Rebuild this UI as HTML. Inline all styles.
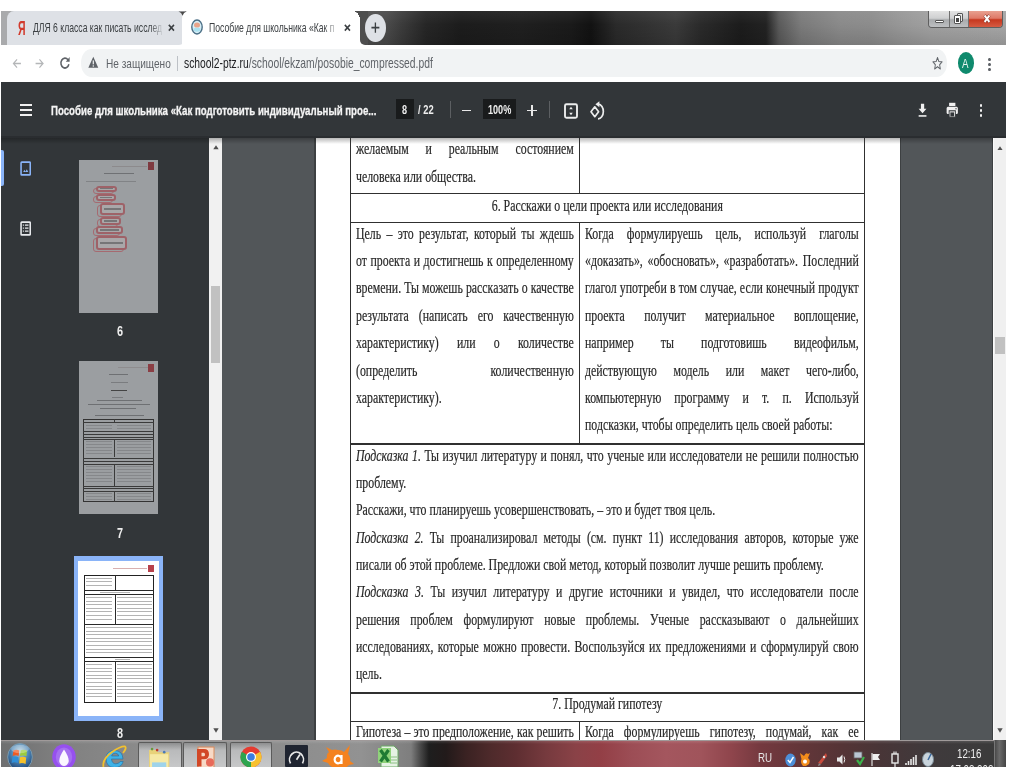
<!DOCTYPE html>
<html><head><meta charset="utf-8"><style>
html,body{margin:0;padding:0;background:#fff;}
body{width:1024px;height:767px;overflow:hidden;position:relative;}
.tl{position:absolute;-webkit-text-stroke:0.2px #333;filter:blur(0.3px);font-family:"Liberation Serif",serif;line-height:20px;white-space:nowrap;transform:scaleX(0.7496339677891655);transform-origin:0 0;}
.tl i{font-style:italic;}
.st{position:absolute;font-family:"Liberation Sans",sans-serif;line-height:20px;white-space:nowrap;}
div{box-sizing:border-box;}
</style></head><body>
<div style="position:absolute;left:1px;top:11px;width:1005px;height:34px;background:linear-gradient(rgba(255,255,255,.06),rgba(0,0,0,0) 40%,rgba(0,0,0,.12)),linear-gradient(90deg,#5a5a5a 0px,#505050 362px,#4a4a4a 386px,#3c3c3c 400px,#262626 425px,#1c1c1c 460px,#1f1f1f 520px,#1a1a1a 570px,#121212 590px,#2a2a2a 615px,#333 650px,#3a3a3a 675px,#2a2a2a 700px,#1c1c1c 740px,#222 765px,#5a5a5a 778px,#7a7a7a 800px,#8a8a8a 840px,#8c8c8c 870px,#979797 900px,#a0a0a0 930px,#a6a6a6 1005px)"></div>
<div style="position:absolute;left:1px;top:11px;width:16px;height:34px;background:#a9aaac"></div>
<div style="position:absolute;left:176px;top:34px;width:12px;height:11px;background:#fff"></div>
<div style="position:absolute;left:7px;top:11px;width:178px;height:33.5px;background:#dee1e6;border-radius:7px 0 6px 0/8px 0 8px 0"></div>
<div style="position:absolute;left:182px;top:11px;width:178px;height:34px;background:#fff;border-radius:5px 5px 0 0/8px 8px 0 0"></div>
<div style="position:absolute;left:355px;top:36px;width:12px;height:9px;background:#fff"></div>
<div style="position:absolute;left:359.5px;top:11px;width:8px;height:34px;background:#4e4e4e;border-radius:0 0 0 5px/0 0 0 5px"></div>
<div style="position:absolute;left:355px;top:11px;width:6px;height:10px;background:radial-gradient(ellipse 5px 9px at 0 100%,#fff 98%,#4e4e4e 100%)"></div>
<svg style="position:absolute;left:178px;top:10.5px;" width="9" height="5" viewBox="0 0 9 5" preserveAspectRatio="none"><path d="M0.5 0.5H8.5Q5.5 1.5 4.6 4.8Q3.6 1.5 0.5 0.5Z" fill="#4a4a4a"/></svg>
<div class="st" style="left:18.2px;top:18.32px;font-size:21px;color:#d23a2c;font-weight:bold;transform:scaleX(0.5);transform-origin:0 0">Я</div>
<div class="st" style="left:33px;top:18.3px;font-size:12.4px;color:#3c4043;font-weight:normal;transform:scaleX(.696);transform-origin:0 0;white-space:nowrap">ДЛЯ 6 класса как писать исслед</div>
<div style="position:absolute;left:150px;top:15px;width:14px;height:26px;background:linear-gradient(90deg,rgba(222,225,230,0),#dee1e6)"></div>
<svg style="position:absolute;left:168px;top:24.3px;" width="6.8" height="7.6" viewBox="0 0 10 10" preserveAspectRatio="none"><path d="M1.2 1.2L8.8 8.8M8.8 1.2L1.2 8.8" stroke="#3c4043" stroke-width="2.3"/></svg>
<svg style="position:absolute;left:191px;top:19px;" width="12" height="16" viewBox="0 0 12 16" preserveAspectRatio="none"><ellipse cx="6" cy="8" rx="5.2" ry="7" fill="#d8eef6" stroke="#4b6f86" stroke-width="1.4"/><ellipse cx="6" cy="6" rx="3" ry="2.6" fill="#e8a48a"/><path d="M2.5 9.5 Q6 8 9.5 9.5 L9 12 Q6 13.5 3 12Z" fill="#a9e1f0"/></svg>
<div class="st" style="left:209px;top:18.3px;font-size:12.4px;color:#3c4043;font-weight:normal;transform:scaleX(.696);transform-origin:0 0;white-space:nowrap">Пособие для школьника «Как п</div>
<div style="position:absolute;left:324px;top:15px;width:16px;height:26px;background:linear-gradient(90deg,rgba(255,255,255,0),#fff)"></div>
<svg style="position:absolute;left:344px;top:24.3px;" width="6.8" height="7.6" viewBox="0 0 10 10" preserveAspectRatio="none"><path d="M1.2 1.2L8.8 8.8M8.8 1.2L1.2 8.8" stroke="#3c4043" stroke-width="2.3"/></svg>
<div style="position:absolute;left:365px;top:13.6px;width:20.8px;height:28.3px;background:#dee1e6;border-radius:50%"></div>
<svg style="position:absolute;left:371px;top:22.4px;" width="8.8" height="11.4" viewBox="0 0 10 10" preserveAspectRatio="none"><path d="M5 0.5V9.5M0.5 5H9.5" stroke="#3c4043" stroke-width="1.5"/></svg>
<div style="position:absolute;left:928.3px;top:11px;width:75.2px;height:17.3px;border:1px solid #5f5f5f;border-top:none;border-radius:0 0 4px 4px;box-sizing:border-box;overflow:hidden;background:#999"><div style="position:absolute;left:0;top:0;width:20px;height:100%;background:linear-gradient(#e3e3e3,#cfd0d1 45%,#a9abad 55%,#bdbfc1)"></div><div style="position:absolute;left:20px;top:0;width:1px;height:100%;background:#707070"></div><div style="position:absolute;left:21px;top:0;width:18px;height:100%;background:linear-gradient(#e3e3e3,#cfd0d1 45%,#a9abad 55%,#bdbfc1)"></div><div style="position:absolute;left:39px;top:0;width:1px;height:100%;background:#707070"></div><div style="position:absolute;left:40px;top:0;width:36px;height:100%;background:linear-gradient(#e8a090,#df7a68 45%,#c6381f 55%,#d65b42)"></div></div>
<div style="position:absolute;left:935px;top:19.8px;width:9px;height:3.6px;background:#fff;border:1px solid #555;border-radius:1px;box-sizing:border-box"></div>
<div style="position:absolute;left:956.6px;top:13px;width:6.4px;height:8.6px;background:#e8e8e8;border:1px solid #555;border-radius:1px;box-sizing:border-box"></div>
<div style="position:absolute;left:954.3px;top:15px;width:6.6px;height:9.4px;background:#fff;border:1px solid #555;border-radius:1px;box-sizing:border-box"><div style="position:absolute;left:1.2px;top:2.2px;width:2.4px;height:3.6px;background:#444"></div></div>
<svg style="position:absolute;left:982.5px;top:14px;" width="8" height="9.5" viewBox="0 0 10 10" preserveAspectRatio="none"><path d="M2 1.5L8 8.5M8 1.5L2 8.5" stroke="#7a2a20" stroke-width="3.6"/><path d="M2 1.5L8 8.5M8 1.5L2 8.5" stroke="#fff" stroke-width="2.4"/></svg>
<div style="position:absolute;left:1px;top:45px;width:1005px;height:36.5px;background:#fff"></div>
<svg style="position:absolute;left:12px;top:57.5px;" width="9.5" height="11" viewBox="0 0 16 16" preserveAspectRatio="none"><path d="M15 8H2.5M8.5 2L2.5 8L8.5 14" fill="none" stroke="#b4b6b8" stroke-width="2"/></svg>
<svg style="position:absolute;left:35px;top:57.5px;" width="9.5" height="11" viewBox="0 0 16 16" preserveAspectRatio="none"><path d="M1 8H13.5M7.5 2L13.5 8L7.5 14" fill="none" stroke="#b4b6b8" stroke-width="2"/></svg>
<svg style="position:absolute;left:58.5px;top:56px;" width="12" height="14.5" viewBox="0 0 16 16" preserveAspectRatio="none"><path d="M13.2 9.2A5.4 5.4 0 1 1 12 4.2" fill="none" stroke="#5f6368" stroke-width="2"/><path d="M14.2 1.2V6.4H9Z" fill="#5f6368"/></svg>
<div style="position:absolute;left:80.6px;top:49.4px;width:866.4px;height:27.3px;background:#f1f3f4;border-radius:10.3px/13.6px"></div>
<svg style="position:absolute;left:88px;top:56.4px;" width="10.6" height="12.6" viewBox="0 0 16 16" preserveAspectRatio="none"><path d="M8 1L15.5 15H0.5Z" fill="#5f6368"/><rect x="7.1" y="5.6" width="1.8" height="5" fill="#f1f3f4"/><rect x="7.1" y="11.8" width="1.8" height="1.8" fill="#f1f3f4"/></svg>
<div class="st" style="left:105.5px;top:53.64px;font-size:13.45px;color:#5f6368;font-weight:normal;transform:scaleX(.75);transform-origin:0 0;white-space:nowrap">Не защищено</div>
<div style="position:absolute;left:176.6px;top:56px;width:1px;height:15px;background:#bdc1c6"></div>
<div class="st" style="left:184px;top:53.54px;font-size:13.75px;color:#5f6368;font-weight:normal;transform:scaleX(.75);transform-origin:0 0;white-space:nowrap"><span style="color:#202124">school2-ptz.ru</span>/school/ekzam/posobie_compressed.pdf</div>
<svg style="position:absolute;left:931.5px;top:55.5px;" width="11" height="14.5" viewBox="0 0 24 24" preserveAspectRatio="none"><path d="M12 2.5l2.9 6.6 7.1.6-5.4 4.7 1.6 7-6.2-3.7-6.2 3.7 1.6-7L2 9.7l7.1-.6z" fill="none" stroke="#5f6368" stroke-width="2" stroke-linejoin="round"/></svg>
<div style="position:absolute;left:958.3px;top:52px;width:16px;height:21.5px;background:#0f8a6d;border-radius:50%"></div>
<div class="st" style="left:962.2px;top:53.5px;font-size:13px;color:#e8f5f0;font-weight:normal;transform:scaleX(.75);transform-origin:0 0">A</div>
<div style="position:absolute;left:988.4px;top:57.6px;width:2.4px;height:3px;background:#5f6368;border-radius:50%"></div>
<div style="position:absolute;left:988.4px;top:62.6px;width:2.4px;height:3px;background:#5f6368;border-radius:50%"></div>
<div style="position:absolute;left:988.4px;top:67.6px;width:2.4px;height:3px;background:#5f6368;border-radius:50%"></div>
<div style="position:absolute;left:1px;top:81.5px;width:1005px;height:56.2px;background:#323639"></div>
<div style="position:absolute;left:20px;top:104px;width:12px;height:2px;background:#f1f1f1"></div>
<div style="position:absolute;left:20px;top:109px;width:12px;height:2px;background:#f1f1f1"></div>
<div style="position:absolute;left:20px;top:114px;width:12px;height:2px;background:#f1f1f1"></div>
<div class="st" style="left:51.3px;top:100.74px;font-size:12.88px;color:#f4f4f4;font-weight:bold;transform:scaleX(.75);transform-origin:0 0;white-space:nowrap;-webkit-text-stroke:0.3px #f4f4f4">Пособие для школьника «Как подготовить индивидуальный прое...</div>
<div style="position:absolute;left:396px;top:99.4px;width:17.5px;height:19.6px;background:#191b1c"></div>
<div class="st" style="left:401.5px;top:99.8px;font-size:13px;color:#eeeeee;font-weight:bold;transform:scaleX(.7);transform-origin:0 0">8</div>
<div class="st" style="left:417.5px;top:99.8px;font-size:13px;color:#eeeeee;font-weight:bold;transform:scaleX(.72);transform-origin:0 0;white-space:nowrap">/ 22</div>
<div style="position:absolute;left:450px;top:101px;width:1px;height:17px;background:#5c5f62"></div>
<div style="position:absolute;left:462px;top:109.5px;width:9px;height:1.6px;background:#e8e8e8"></div>
<div style="position:absolute;left:483px;top:99.4px;width:33px;height:19.6px;background:#191b1c"></div>
<div class="st" style="left:487.8px;top:99.8px;font-size:13px;color:#eeeeee;font-weight:bold;transform:scaleX(.70);transform-origin:0 0;white-space:nowrap">100%</div>
<div style="position:absolute;left:527px;top:109.8px;width:10px;height:1.5px;background:#e8e8e8"></div>
<div style="position:absolute;left:531.3px;top:104.8px;width:1.4px;height:11.6px;background:#e8e8e8"></div>
<div style="position:absolute;left:549px;top:101px;width:1px;height:17px;background:#5c5f62"></div>
<svg style="position:absolute;left:560px;top:98px;" width="50" height="25" viewBox="0 0 50 25" preserveAspectRatio="none"><rect x="5" y="6.3" width="12" height="13.5" rx="1.5" fill="none" stroke="#eceded" stroke-width="1.9"/><path d="M11 8.8L9.2 11.3H12.8Z M11 17.2L9.2 14.7H12.8Z" fill="#eceded"/><path d="M34.8 8.8L38.6 13.7L34.8 18.7L31 13.7Z" fill="none" stroke="#eceded" stroke-width="1.7" stroke-linejoin="round"/><path d="M38.3 6.2A5.2 7.3 0 0 1 38 20.8" fill="none" stroke="#eceded" stroke-width="1.7"/><path d="M39.4 3.2V9.2L35.4 6.2Z" fill="#eceded"/></svg>
<svg style="position:absolute;left:917.5px;top:102.7px;" width="9.1" height="14.3" viewBox="0 0 14 20" preserveAspectRatio="none"><path d="M4.5 1H9.5V8H13L7 14.5L1 8H4.5Z" fill="#f1f1f1"/><rect x="1" y="17" width="12" height="2.2" fill="#f1f1f1"/></svg>
<svg style="position:absolute;left:945.5px;top:102px;" width="12.5" height="16" viewBox="0 0 20 20" preserveAspectRatio="none"><rect x="5" y="1" width="10" height="4" fill="#f1f1f1"/><rect x="1" y="6" width="18" height="9" rx="2" fill="#f1f1f1"/><rect x="5" y="11" width="10" height="8" fill="#f1f1f1" stroke="#323639" stroke-width="1.4"/><rect x="7" y="13" width="6" height="5" fill="#323639"/><circle cx="16" cy="8.5" r="1" fill="#323639"/></svg>
<div style="position:absolute;left:980px;top:104px;width:2.4px;height:2.6px;background:#f1f1f1;border-radius:50%"></div>
<div style="position:absolute;left:980px;top:109.2px;width:2.4px;height:2.6px;background:#f1f1f1;border-radius:50%"></div>
<div style="position:absolute;left:980px;top:114.4px;width:2.4px;height:2.6px;background:#f1f1f1;border-radius:50%"></div>
<div style="position:absolute;left:1px;top:137.7px;width:208px;height:602.3px;background:#323639"></div>
<div style="position:absolute;left:1px;top:150px;width:2.6px;height:36px;background:#8ab4f8;border-radius:0 2px 2px 0"></div>
<svg style="position:absolute;left:20.2px;top:160.5px;" width="11.3" height="15" viewBox="0 0 16 20" preserveAspectRatio="none"><rect x="1.5" y="1.5" width="13" height="17" rx="1" fill="none" stroke="#8ab4f8" stroke-width="2.2"/><path d="M4.5 14.5L6.3 11.5L8 14.5Z M7.5 14.5L9.6 11L11.7 14.5Z" fill="#8ab4f8"/></svg>
<svg style="position:absolute;left:20.2px;top:220.5px;" width="11.3" height="15" viewBox="0 0 16 20" preserveAspectRatio="none"><rect x="1.5" y="1.5" width="13" height="17" rx="1" fill="none" stroke="#e8eaed" stroke-width="2.2"/><path d="M4 5.5H5.5M4 9.5H5.5M4 13.5H5.5M7 5.5H12M7 9.5H12M7 13.5H12" stroke="#e8eaed" stroke-width="1.8"/></svg>
<div style="position:absolute;left:0;top:0;width:1024px;height:767px;filter:blur(0.35px)">
<div style="position:absolute;left:78.8px;top:159.8px;width:79.2px;height:152.8px;background:#9b9ea1"></div>
<div style="position:absolute;left:147.6px;top:161.8px;width:6.9px;height:8.2px;background:#7e3a40"></div>
<div style="position:absolute;left:112px;top:166px;width:35px;height:0.8px;background:#8c8a8c"></div>
<div style="position:absolute;left:104px;top:173px;width:30px;height:1.2px;background:#6f7174"></div>
<div style="position:absolute;left:86px;top:181px;width:50px;height:1px;background:#818386"></div>
<div style="position:absolute;left:93px;top:188px;width:21px;height:5.5px;border:1.8px solid #a66a70;border-radius:3px;box-sizing:border-box"></div>
<div style="position:absolute;left:96px;top:186px;width:21px;height:5.5px;border:2px solid #9e6268;border-radius:3px;box-sizing:border-box;background:#a9a7a9"></div>
<div style="position:absolute;left:100px;top:188.15px;width:13px;height:1.2px;background:#767577"></div>
<div style="position:absolute;left:93px;top:196px;width:20px;height:7px;border:1.8px solid #a66a70;border-radius:3px;box-sizing:border-box"></div>
<div style="position:absolute;left:96px;top:194px;width:20px;height:7px;border:2px solid #9e6268;border-radius:3px;box-sizing:border-box;background:#a9a7a9"></div>
<div style="position:absolute;left:100px;top:196.9px;width:12px;height:1.2px;background:#767577"></div>
<div style="position:absolute;left:97px;top:205px;width:25px;height:12px;border:1.8px solid #a66a70;border-radius:3px;box-sizing:border-box"></div>
<div style="position:absolute;left:100px;top:203px;width:25px;height:12px;border:2px solid #9e6268;border-radius:3px;box-sizing:border-box;background:#a9a7a9"></div>
<div style="position:absolute;left:104px;top:208.4px;width:17px;height:1.2px;background:#767577"></div>
<div style="position:absolute;left:97px;top:219px;width:21px;height:8px;border:1.8px solid #a66a70;border-radius:3px;box-sizing:border-box"></div>
<div style="position:absolute;left:100px;top:217px;width:21px;height:8px;border:2px solid #9e6268;border-radius:3px;box-sizing:border-box;background:#a9a7a9"></div>
<div style="position:absolute;left:104px;top:220.4px;width:13px;height:1.2px;background:#767577"></div>
<div style="position:absolute;left:93px;top:228px;width:27px;height:8px;border:1.8px solid #a66a70;border-radius:3px;box-sizing:border-box"></div>
<div style="position:absolute;left:96px;top:226px;width:27px;height:8px;border:2px solid #9e6268;border-radius:3px;box-sizing:border-box;background:#a9a7a9"></div>
<div style="position:absolute;left:100px;top:229.4px;width:19px;height:1.2px;background:#767577"></div>
<div style="position:absolute;left:93px;top:238px;width:31px;height:14px;border:1.8px solid #a66a70;border-radius:3px;box-sizing:border-box"></div>
<div style="position:absolute;left:96px;top:236px;width:31px;height:14px;border:2px solid #9e6268;border-radius:3px;box-sizing:border-box;background:#a9a7a9"></div>
<div style="position:absolute;left:100px;top:242.4px;width:23px;height:1.2px;background:#767577"></div>
<div class="st" style="left:116.5px;top:320.98px;font-size:14.5px;color:#eeeeee;font-weight:bold;transform:scaleX(.75);transform-origin:0 0">6</div>
<div style="position:absolute;left:78.8px;top:361px;width:79.2px;height:152.8px;background:#9b9ea1"></div>
<div style="position:absolute;left:148px;top:364px;width:6px;height:7.6px;background:#8a3e44"></div>
<div style="position:absolute;left:118px;top:367px;width:30px;height:0.8px;background:#8e8c8e"></div>
<div style="position:absolute;left:109px;top:374px;width:19px;height:1px;background:#6e7073"></div>
<div style="position:absolute;left:111px;top:382px;width:17px;height:1px;background:#7a7c7f"></div>
<div style="position:absolute;left:111px;top:389.5px;width:16px;height:1.6px;background:#444"></div>
<div style="position:absolute;left:112px;top:397px;width:11px;height:1px;background:#7a7c7f"></div>
<div style="position:absolute;left:97px;top:400.3px;width:45px;height:1px;background:#6e7073"></div>
<div style="position:absolute;left:88px;top:404.3px;width:62px;height:1px;background:#6e7073"></div>
<div style="position:absolute;left:100px;top:408.3px;width:36px;height:1px;background:#6e7073"></div>
<div style="position:absolute;left:95px;top:414.8px;width:49px;height:1px;background:#6e7073"></div>
<div style="position:absolute;left:83.4px;top:418.5px;width:70.3px;height:83.5px;border:1.2px solid #333;box-sizing:border-box"></div>
<div style="position:absolute;left:83.4px;top:422.3px;width:70.3px;height:0.9px;background:#3a3a3a"></div>
<div style="position:absolute;left:83.4px;top:431.3px;width:70.3px;height:0.9px;background:#3a3a3a"></div>
<div style="position:absolute;left:83.4px;top:433.6px;width:70.3px;height:0.9px;background:#3a3a3a"></div>
<div style="position:absolute;left:83.4px;top:436.6px;width:70.3px;height:0.9px;background:#3a3a3a"></div>
<div style="position:absolute;left:83.4px;top:438.8px;width:70.3px;height:0.9px;background:#3a3a3a"></div>
<div style="position:absolute;left:83.4px;top:457.5px;width:70.3px;height:0.9px;background:#3a3a3a"></div>
<div style="position:absolute;left:83.4px;top:461.3px;width:70.3px;height:0.9px;background:#3a3a3a"></div>
<div style="position:absolute;left:83.4px;top:463.6px;width:70.3px;height:0.9px;background:#3a3a3a"></div>
<div style="position:absolute;left:83.4px;top:486.2px;width:70.3px;height:0.9px;background:#3a3a3a"></div>
<div style="position:absolute;left:83.4px;top:488.4px;width:70.3px;height:0.9px;background:#3a3a3a"></div>
<div style="position:absolute;left:83.4px;top:490.8px;width:70.3px;height:0.9px;background:#3a3a3a"></div>
<div style="position:absolute;left:114.2px;top:418.5px;width:0.9px;height:3.8px;background:#3a3a3a"></div>
<div style="position:absolute;left:114.2px;top:438.8px;width:0.9px;height:18.7px;background:#3a3a3a"></div>
<div style="position:absolute;left:114.2px;top:463.6px;width:0.9px;height:22.6px;background:#3a3a3a"></div>
<div style="position:absolute;left:114.2px;top:490.8px;width:0.9px;height:11.2px;background:#3a3a3a"></div>
<div style="position:absolute;left:86px;top:425px;width:26px;height:0.7px;background:#85878a"></div>
<div style="position:absolute;left:117px;top:425px;width:34px;height:0.7px;background:#85878a"></div>
<div style="position:absolute;left:86px;top:428px;width:26px;height:0.7px;background:#85878a"></div>
<div style="position:absolute;left:117px;top:428px;width:34px;height:0.7px;background:#85878a"></div>
<div style="position:absolute;left:86px;top:441px;width:26px;height:0.7px;background:#85878a"></div>
<div style="position:absolute;left:117px;top:441px;width:34px;height:0.7px;background:#85878a"></div>
<div style="position:absolute;left:86px;top:444px;width:26px;height:0.7px;background:#85878a"></div>
<div style="position:absolute;left:117px;top:444px;width:34px;height:0.7px;background:#85878a"></div>
<div style="position:absolute;left:86px;top:447px;width:26px;height:0.7px;background:#85878a"></div>
<div style="position:absolute;left:117px;top:447px;width:34px;height:0.7px;background:#85878a"></div>
<div style="position:absolute;left:86px;top:450px;width:26px;height:0.7px;background:#85878a"></div>
<div style="position:absolute;left:117px;top:450px;width:34px;height:0.7px;background:#85878a"></div>
<div style="position:absolute;left:86px;top:453px;width:26px;height:0.7px;background:#85878a"></div>
<div style="position:absolute;left:117px;top:453px;width:34px;height:0.7px;background:#85878a"></div>
<div style="position:absolute;left:86px;top:466px;width:26px;height:0.7px;background:#85878a"></div>
<div style="position:absolute;left:117px;top:466px;width:34px;height:0.7px;background:#85878a"></div>
<div style="position:absolute;left:86px;top:469px;width:26px;height:0.7px;background:#85878a"></div>
<div style="position:absolute;left:117px;top:469px;width:34px;height:0.7px;background:#85878a"></div>
<div style="position:absolute;left:86px;top:472px;width:26px;height:0.7px;background:#85878a"></div>
<div style="position:absolute;left:117px;top:472px;width:34px;height:0.7px;background:#85878a"></div>
<div style="position:absolute;left:86px;top:475px;width:26px;height:0.7px;background:#85878a"></div>
<div style="position:absolute;left:117px;top:475px;width:34px;height:0.7px;background:#85878a"></div>
<div style="position:absolute;left:86px;top:478px;width:26px;height:0.7px;background:#85878a"></div>
<div style="position:absolute;left:117px;top:478px;width:34px;height:0.7px;background:#85878a"></div>
<div style="position:absolute;left:86px;top:481px;width:26px;height:0.7px;background:#85878a"></div>
<div style="position:absolute;left:117px;top:481px;width:34px;height:0.7px;background:#85878a"></div>
<div style="position:absolute;left:86px;top:493px;width:26px;height:0.7px;background:#85878a"></div>
<div style="position:absolute;left:117px;top:493px;width:34px;height:0.7px;background:#85878a"></div>
<div style="position:absolute;left:86px;top:496px;width:26px;height:0.7px;background:#85878a"></div>
<div style="position:absolute;left:117px;top:496px;width:34px;height:0.7px;background:#85878a"></div>
<div style="position:absolute;left:86px;top:499px;width:26px;height:0.7px;background:#85878a"></div>
<div style="position:absolute;left:117px;top:499px;width:34px;height:0.7px;background:#85878a"></div>
<div class="st" style="left:116.5px;top:522.98px;font-size:14.5px;color:#eeeeee;font-weight:bold;transform:scaleX(.75);transform-origin:0 0">7</div>
<div style="position:absolute;left:73.6px;top:556px;width:89.4px;height:165px;background:#8ab4f8"></div>
<div style="position:absolute;left:78px;top:561px;width:80.5px;height:155px;background:#fff"></div>
<div style="position:absolute;left:148px;top:565px;width:5.8px;height:6.8px;background:#b8414b"></div>
<div style="position:absolute;left:113px;top:568px;width:34px;height:0.8px;background:#d9b0b0"></div>
<div style="position:absolute;left:83.6px;top:574.8px;width:70.2px;height:127.8px;border:1.2px solid #222;box-sizing:border-box"></div>
<div style="position:absolute;left:83.6px;top:590.2px;width:70.2px;height:1.1px;background:#2a2a2a"></div>
<div style="position:absolute;left:83.6px;top:594px;width:70.2px;height:1.1px;background:#2a2a2a"></div>
<div style="position:absolute;left:83.6px;top:623.8px;width:70.2px;height:1.1px;background:#2a2a2a"></div>
<div style="position:absolute;left:83.6px;top:657px;width:70.2px;height:1.1px;background:#2a2a2a"></div>
<div style="position:absolute;left:83.6px;top:660.8px;width:70.2px;height:1.1px;background:#2a2a2a"></div>
<div style="position:absolute;left:114.6px;top:574.8px;width:1px;height:15.4px;background:#2a2a2a"></div>
<div style="position:absolute;left:114.6px;top:594px;width:1px;height:29.8px;background:#2a2a2a"></div>
<div style="position:absolute;left:114.6px;top:660.8px;width:1px;height:41.8px;background:#2a2a2a"></div>
<div style="position:absolute;left:86px;top:577.5px;width:26px;height:1px;background:#b4b4b4"></div>
<div style="position:absolute;left:86px;top:581.2px;width:26px;height:1px;background:#b4b4b4"></div>
<div style="position:absolute;left:86px;top:585px;width:26px;height:1px;background:#b4b4b4"></div>
<div style="position:absolute;left:86px;top:597px;width:26px;height:1px;background:#b4b4b4"></div>
<div style="position:absolute;left:86px;top:600.6px;width:26px;height:1px;background:#b4b4b4"></div>
<div style="position:absolute;left:86px;top:604.2px;width:26px;height:1px;background:#b4b4b4"></div>
<div style="position:absolute;left:86px;top:607.8px;width:26px;height:1px;background:#b4b4b4"></div>
<div style="position:absolute;left:86px;top:611.4px;width:26px;height:1px;background:#b4b4b4"></div>
<div style="position:absolute;left:86px;top:615px;width:26px;height:1px;background:#b4b4b4"></div>
<div style="position:absolute;left:86px;top:618.6px;width:26px;height:1px;background:#b4b4b4"></div>
<div style="position:absolute;left:117px;top:597px;width:34.5px;height:1px;background:#b4b4b4"></div>
<div style="position:absolute;left:117px;top:600.6px;width:34.5px;height:1px;background:#b4b4b4"></div>
<div style="position:absolute;left:117px;top:604.2px;width:34.5px;height:1px;background:#b4b4b4"></div>
<div style="position:absolute;left:117px;top:607.8px;width:34.5px;height:1px;background:#b4b4b4"></div>
<div style="position:absolute;left:117px;top:611.4px;width:34.5px;height:1px;background:#b4b4b4"></div>
<div style="position:absolute;left:117px;top:615px;width:34.5px;height:1px;background:#b4b4b4"></div>
<div style="position:absolute;left:117px;top:618.6px;width:34.5px;height:1px;background:#b4b4b4"></div>
<div style="position:absolute;left:86px;top:627px;width:65.5px;height:1px;background:#b4b4b4"></div>
<div style="position:absolute;left:86px;top:630.6px;width:65.5px;height:1px;background:#b4b4b4"></div>
<div style="position:absolute;left:86px;top:634.2px;width:65.5px;height:1px;background:#b4b4b4"></div>
<div style="position:absolute;left:86px;top:637.8px;width:65.5px;height:1px;background:#b4b4b4"></div>
<div style="position:absolute;left:86px;top:641.4px;width:65.5px;height:1px;background:#b4b4b4"></div>
<div style="position:absolute;left:86px;top:645px;width:65.5px;height:1px;background:#b4b4b4"></div>
<div style="position:absolute;left:86px;top:648.6px;width:65.5px;height:1px;background:#b4b4b4"></div>
<div style="position:absolute;left:86px;top:652.2px;width:65.5px;height:1px;background:#b4b4b4"></div>
<div style="position:absolute;left:100px;top:592px;width:30px;height:1px;background:#b4b4b4"></div>
<div style="position:absolute;left:115px;top:659px;width:15px;height:1px;background:#b4b4b4"></div>
<div style="position:absolute;left:86px;top:664px;width:26px;height:1px;background:#b4b4b4"></div>
<div style="position:absolute;left:86px;top:667.6px;width:26px;height:1px;background:#b4b4b4"></div>
<div style="position:absolute;left:86px;top:671.2px;width:26px;height:1px;background:#b4b4b4"></div>
<div style="position:absolute;left:86px;top:674.8px;width:26px;height:1px;background:#b4b4b4"></div>
<div style="position:absolute;left:86px;top:678.4px;width:26px;height:1px;background:#b4b4b4"></div>
<div style="position:absolute;left:86px;top:682px;width:26px;height:1px;background:#b4b4b4"></div>
<div style="position:absolute;left:86px;top:685.6px;width:26px;height:1px;background:#b4b4b4"></div>
<div style="position:absolute;left:86px;top:689.2px;width:26px;height:1px;background:#b4b4b4"></div>
<div style="position:absolute;left:86px;top:692.8px;width:26px;height:1px;background:#b4b4b4"></div>
<div style="position:absolute;left:86px;top:696.4px;width:26px;height:1px;background:#b4b4b4"></div>
<div style="position:absolute;left:117px;top:664px;width:34.5px;height:1px;background:#b4b4b4"></div>
<div style="position:absolute;left:117px;top:667.6px;width:34.5px;height:1px;background:#b4b4b4"></div>
<div style="position:absolute;left:117px;top:671.2px;width:34.5px;height:1px;background:#b4b4b4"></div>
<div style="position:absolute;left:117px;top:674.8px;width:34.5px;height:1px;background:#b4b4b4"></div>
<div style="position:absolute;left:117px;top:678.4px;width:34.5px;height:1px;background:#b4b4b4"></div>
<div style="position:absolute;left:117px;top:682px;width:34.5px;height:1px;background:#b4b4b4"></div>
<div style="position:absolute;left:117px;top:685.6px;width:34.5px;height:1px;background:#b4b4b4"></div>
<div style="position:absolute;left:117px;top:689.2px;width:34.5px;height:1px;background:#b4b4b4"></div>
<div style="position:absolute;left:117px;top:692.8px;width:34.5px;height:1px;background:#b4b4b4"></div>
<div style="position:absolute;left:117px;top:696.4px;width:34.5px;height:1px;background:#b4b4b4"></div>
<div class="st" style="left:116.5px;top:723.48px;font-size:14.5px;color:#eeeeee;font-weight:bold;transform:scaleX(.75);transform-origin:0 0">8</div>
</div>
<div style="position:absolute;left:209px;top:137.7px;width:13px;height:602.3px;background:#f1f1f1"></div>
<svg style="position:absolute;left:212.5px;top:145px;" width="6" height="4.5" viewBox="0 0 10 8" preserveAspectRatio="none"><path d="M5 0.5L9.5 7.5H0.5Z" fill="#505050"/></svg>
<div style="position:absolute;left:210.5px;top:285.5px;width:9.1px;height:77.5px;background:#c1c1c1"></div>
<svg style="position:absolute;left:212.5px;top:727.5px;" width="6" height="5" viewBox="0 0 10 8" preserveAspectRatio="none"><path d="M5 7.5L9.5 0.5H0.5Z" fill="#505050"/></svg>
<div style="position:absolute;left:222px;top:137.7px;width:771.5px;height:602.3px;background:#525659"></div>
<div style="position:absolute;left:315.4px;top:137.7px;width:584.3px;height:602.3px;background:#fff"></div>
<div style="position:absolute;left:314.2px;top:137.7px;width:1.4px;height:602.3px;background:#3d4042"></div>
<div style="position:absolute;left:899.6px;top:137.7px;width:1.4px;height:602.3px;background:#3d4042"></div>
<div style="position:absolute;left:991.8px;top:137.7px;width:1.6px;height:602.3px;background:#3d4042"></div>
<div style="position:absolute;left:1px;top:136.2px;width:1005px;height:1.5px;background:#2a2d30"></div>
<div style="position:absolute;left:1px;top:137.7px;width:1005px;height:6px;background:linear-gradient(rgba(0,0,0,.28),rgba(0,0,0,0))"></div>
<div style="position:absolute;left:993.4px;top:137.7px;width:12.2px;height:602.3px;background:#f0f0f0;border-left:1.2px solid #fafafa"></div>
<svg style="position:absolute;left:996.8px;top:145.5px;" width="6" height="4.5" viewBox="0 0 10 8" preserveAspectRatio="none"><path d="M5 0.5L9.5 7.5H0.5Z" fill="#505050"/></svg>
<div style="position:absolute;left:995px;top:337.3px;width:9.5px;height:16.5px;background:#c1c1c1"></div>
<svg style="position:absolute;left:997px;top:727.5px;" width="6" height="5" viewBox="0 0 10 8" preserveAspectRatio="none"><path d="M5 7.5L9.5 0.5H0.5Z" fill="#505050"/></svg>
<div style="position:absolute;left:350px;top:137.7px;width:1.3px;height:602.3px;background:#303030"></div>
<div style="position:absolute;left:863.9px;top:137.7px;width:1.3px;height:602.3px;background:#303030"></div>
<div style="position:absolute;left:578.7px;top:137.7px;width:1.3px;height:55.7px;background:#303030"></div>
<div style="position:absolute;left:578.7px;top:222.5px;width:1.3px;height:221.5px;background:#303030"></div>
<div style="position:absolute;left:578.7px;top:721.3px;width:1.3px;height:18.7px;background:#303030"></div>
<div style="position:absolute;left:350.6px;top:192.6px;width:514.9px;height:1.6px;background:#303030"></div>
<div style="position:absolute;left:350.6px;top:221.7px;width:514.9px;height:1.6px;background:#303030"></div>
<div style="position:absolute;left:350.6px;top:443.2px;width:514.9px;height:1.6px;background:#303030"></div>
<div style="position:absolute;left:350.6px;top:692.4px;width:514.9px;height:1.6px;background:#303030"></div>
<div style="position:absolute;left:350.6px;top:720.5px;width:514.9px;height:1.6px;background:#303030"></div>
<div class="tl" style="left:356px;top:139.07px;width:290.54px;font-size:15.8px;text-align:justify;text-align-last:justify;color:#262626">желаемым и реальным состоянием</div>
<div class="tl" style="left:356px;top:166.57px;width:290.54px;font-size:15.8px;text-align:left;color:#262626">человека или общества.</div>
<div class="tl" style="left:356px;top:195.57px;width:670.46px;font-size:15.8px;text-align:center;color:#262626">6. Расскажи о цели проекта или исследования</div>
<div class="tl" style="left:356px;top:223.77px;width:290.54px;font-size:15.8px;text-align:justify;text-align-last:justify;color:#262626">Цель – это результат, который ты ждешь</div>
<div class="tl" style="left:356px;top:251.12px;width:290.54px;font-size:15.8px;text-align:justify;text-align-last:justify;color:#262626">от проекта и достигнешь к определенному</div>
<div class="tl" style="left:356px;top:278.47px;width:290.54px;font-size:15.8px;text-align:justify;text-align-last:justify;color:#262626">времени. Ты можешь рассказать о качестве</div>
<div class="tl" style="left:356px;top:305.82px;width:290.54px;font-size:15.8px;text-align:justify;text-align-last:justify;color:#262626">результата (написать его качественную</div>
<div class="tl" style="left:356px;top:333.17px;width:290.54px;font-size:15.8px;text-align:justify;text-align-last:justify;color:#262626">характеристику) или о количестве</div>
<div class="tl" style="left:356px;top:360.52px;width:290.54px;font-size:15.8px;text-align:justify;text-align-last:justify;color:#262626">(определить количественную</div>
<div class="tl" style="left:356px;top:387.87px;width:290.54px;font-size:15.8px;text-align:left;color:#262626">характеристику).</div>
<div class="tl" style="left:584.8px;top:223.77px;width:365.24px;font-size:15.8px;text-align:justify;text-align-last:justify;color:#262626">Когда формулируешь цель, используй глаголы</div>
<div class="tl" style="left:584.8px;top:251.12px;width:365.24px;font-size:15.8px;text-align:justify;text-align-last:justify;color:#262626">«доказать», «обосновать», «разработать». Последний</div>
<div class="tl" style="left:584.8px;top:278.47px;width:365.24px;font-size:15.8px;text-align:justify;text-align-last:justify;color:#262626">глагол употреби в том случае, если конечный продукт</div>
<div class="tl" style="left:584.8px;top:305.82px;width:365.24px;font-size:15.8px;text-align:justify;text-align-last:justify;color:#262626">проекта получит материальное воплощение,</div>
<div class="tl" style="left:584.8px;top:333.17px;width:365.24px;font-size:15.8px;text-align:justify;text-align-last:justify;color:#262626">например ты подготовишь видеофильм,</div>
<div class="tl" style="left:584.8px;top:360.52px;width:365.24px;font-size:15.8px;text-align:justify;text-align-last:justify;color:#262626">действующую модель или макет чего-либо,</div>
<div class="tl" style="left:584.8px;top:387.87px;width:365.24px;font-size:15.8px;text-align:justify;text-align-last:justify;color:#262626">компьютерную программу и т. п. Используй</div>
<div class="tl" style="left:584.8px;top:415.22px;width:365.24px;font-size:15.8px;text-align:left;color:#262626">подсказки, чтобы определить цель своей работы:</div>
<div class="tl" style="left:356px;top:445.57px;width:670.46px;font-size:15.8px;text-align:justify;text-align-last:justify;color:#262626"><i>Подсказка 1.</i> Ты изучил литературу и понял, что ученые или исследователи не решили полностью</div>
<div class="tl" style="left:356px;top:472.92px;width:670.46px;font-size:15.8px;text-align:left;color:#262626">проблему.</div>
<div class="tl" style="left:356px;top:500.27px;width:670.46px;font-size:15.8px;text-align:left;color:#262626">Расскажи, что планируешь усовершенствовать, – это и будет твоя цель.</div>
<div class="tl" style="left:356px;top:527.62px;width:670.46px;font-size:15.8px;text-align:justify;text-align-last:justify;color:#262626"><i>Подсказка 2.</i> Ты проанализировал методы (см. пункт 11) исследования авторов, которые уже</div>
<div class="tl" style="left:356px;top:554.97px;width:670.46px;font-size:15.8px;text-align:left;color:#262626">писали об этой проблеме. Предложи свой метод, который позволит лучше решить проблему.</div>
<div class="tl" style="left:356px;top:582.32px;width:670.46px;font-size:15.8px;text-align:justify;text-align-last:justify;color:#262626"><i>Подсказка 3.</i> Ты изучил литературу и другие источники и увидел, что исследователи после</div>
<div class="tl" style="left:356px;top:609.67px;width:670.46px;font-size:15.8px;text-align:justify;text-align-last:justify;color:#262626">решения проблем формулируют новые проблемы. Ученые рассказывают о дальнейших</div>
<div class="tl" style="left:356px;top:637.02px;width:670.46px;font-size:15.8px;text-align:justify;text-align-last:justify;color:#262626">исследованиях, которые можно провести. Воспользуйся их предложениями и сформулируй свою</div>
<div class="tl" style="left:356px;top:664.37px;width:670.46px;font-size:15.8px;text-align:left;color:#262626">цель.</div>
<div class="tl" style="left:356px;top:694.37px;width:670.46px;font-size:15.8px;text-align:center;color:#262626">7. Продумай гипотезу</div>
<div class="tl" style="left:356px;top:722.37px;width:290.54px;font-size:15.8px;text-align:justify;text-align-last:justify;color:#262626">Гипотеза – это предположение, как решить</div>
<div class="tl" style="left:584.8px;top:722.37px;width:365.24px;font-size:15.8px;text-align:justify;text-align-last:justify;color:#262626">Когда формулируешь гипотезу, подумай, как ее</div>
<div style="position:absolute;left:1px;top:740px;width:1005px;height:27px;background:linear-gradient(90deg,#6e6f70 0px,#808080 60px,#8a8a8a 135px,#8c8c8c 250px,#8e8e8e 300px,#929292 360px,#7e7e7e 410px,#505050 418px,#1e1e1e 428px,#221a1a 445px,#3a2222 465px,#4e2a2b 490px,#5e2e31 515px,#763a3e 545px,#8a4247 575px,#933f46 600px,#9c4d55 630px,#a4565e 665px,#a0545b 700px,#8f454c 730px,#74393f 760px,#633639 800px,#553436 840px,#483537 880px,#3f3a3c 930px,#3b3b3b 990px,#3b3b3b 1005px)"></div>
<div style="position:absolute;left:1px;top:740px;width:1005px;height:27px;background:radial-gradient(ellipse 25px 18px at 652px 767px,rgba(240,160,170,.45),rgba(240,160,170,0)),radial-gradient(ellipse 30px 14px at 620px 752px,rgba(120,30,40,.35),rgba(120,30,40,0)),radial-gradient(ellipse 18px 14px at 625px 767px,rgba(230,150,160,.3),rgba(230,150,160,0))"></div>
<div style="position:absolute;left:1px;top:740px;width:1005px;height:1.3px;background:#a09a9a"></div>
<div style="position:absolute;left:1px;top:741.2px;width:1005px;height:3px;background:linear-gradient(rgba(255,255,255,.12),rgba(255,255,255,0))"></div>
<div style="position:absolute;left:138.2px;top:741.5px;width:43.8px;height:25.5px;background:linear-gradient(#8d8e8f,#b9babb 30%,#c7c8c9);border:1px solid #5b5b5b;border-bottom:none;border-radius:2px 2px 0 0;box-sizing:border-box"></div>
<div style="position:absolute;left:183.4px;top:741.5px;width:43.2px;height:25.5px;background:linear-gradient(#8d8e8f,#b9babb 30%,#c7c8c9);border:1px solid #5b5b5b;border-bottom:none;border-radius:2px 2px 0 0;box-sizing:border-box"></div>
<div style="position:absolute;left:229.8px;top:741.5px;width:42.2px;height:25.5px;background:linear-gradient(#8d8e8f,#b9babb 30%,#c7c8c9);border:1px solid #5b5b5b;border-bottom:none;border-radius:2px 2px 0 0;box-sizing:border-box"></div>
<svg style="position:absolute;left:7px;top:742.5px;" width="26" height="25" viewBox="0 0 26 25" preserveAspectRatio="none"><defs><radialGradient id="orb" cx=".5" cy=".3" r=".75"><stop offset="0" stop-color="#b9d3df"/><stop offset=".45" stop-color="#4f88b8"/><stop offset="1" stop-color="#163a6a"/></radialGradient></defs><ellipse cx="13" cy="14" rx="12.3" ry="13.5" fill="url(#orb)" stroke="#7a9aae" stroke-width="1"/><path d="M6.5 7.5 Q9.5 5.8 12.3 7.5 L11.6 13 Q8.8 11.6 5.6 13Z" fill="#ef5a23"/><path d="M13.6 7.5 Q16.6 6 20 7.8 L19.4 13.2 Q16.5 11.8 13 13Z" fill="#9ccc3c"/><path d="M5.4 14.3 Q8.6 12.9 11.4 14.3 L10.8 20 Q7.8 18.6 4.6 20Z" fill="#2f8fd8"/><path d="M12.8 14.3 Q16 13 19.2 14.5 L18.6 21 Q15.6 19.4 12.2 20.4Z" fill="#f6c12a"/><ellipse cx="13" cy="6" rx="9" ry="4.2" fill="rgba(255,255,255,.28)"/></svg>
<svg style="position:absolute;left:51.5px;top:744px;" width="24" height="23" viewBox="0 0 24 23" preserveAspectRatio="none"><ellipse cx="12" cy="13" rx="11.8" ry="12.8" fill="#9650ee"/><ellipse cx="12" cy="13" rx="8.2" ry="9.4" fill="#a56ff0"/><path d="M12 5.5 Q17.6 14 16.6 18 Q15 22 12 22 Q9 22 7.4 18 Q6.4 14 12 5.5Z" fill="#fbf6ff"/></svg>
<svg style="position:absolute;left:102px;top:744px;" width="25" height="23" viewBox="0 0 25 23" preserveAspectRatio="none"><path d="M4 14 Q4.5 6.5 12.5 6.5 Q20.5 6.5 21 15 H9.5 Q10 19.8 13.8 19.8 Q17 19.8 18.2 17.5 H21.2 Q19.6 23.5 12.5 23.5 Q4 23.5 4 14Z M9.6 12 H16.8 Q16.2 9.2 13.2 9.2 Q10.1 9.2 9.6 12Z" fill="#3fb2e6" stroke="#1c6fa8" stroke-width=".6"/><path d="M1.5 23 Q0 15 10 8 Q19 2 23 2.5 Q25 4 21 9" fill="none" stroke="#f2c12e" stroke-width="1.8"/></svg>
<svg style="position:absolute;left:147.7px;top:745.5px;" width="22.3" height="21.5" viewBox="0 0 22 21" preserveAspectRatio="none"><path d="M1 4 H8 L10 6 H21 V21 H1Z" fill="#e8d27a"/><rect x="2" y="8" width="18" height="13" fill="#f6e9a6"/><rect x="4" y="16" width="14" height="5" fill="#9fd3ea"/><circle cx="4" cy="3" r="1.3" fill="#6a9a3a"/><circle cx="9" cy="4" r="1.3" fill="#c0392b"/><circle cx="16" cy="6" r="1.3" fill="#4a7ab8"/></svg>
<svg style="position:absolute;left:194px;top:745.5px;" width="21" height="21.5" viewBox="0 0 21 21" preserveAspectRatio="none"><rect x="4" y="1" width="16" height="20" fill="#f7d9c6" stroke="#d98a5a" stroke-width="1"/><path d="M3 3 H10 Q15 3 15 8 Q15 13 10 13 H7.5 V20 H3Z M7.5 6.5 V10 H9.8 Q11 10 11 8.2 Q11 6.5 9.8 6.5Z" fill="#d24726"/><circle cx="16" cy="16" r="4" fill="#e86a5a"/></svg>
<svg style="position:absolute;left:240px;top:745px;" width="22" height="22" viewBox="0 0 22 22" preserveAspectRatio="none"><circle cx="11" cy="12" r="10.5" fill="#e53b30"/><path d="M11 12 L20.1 6.7 A10.5 10.5 0 0 1 11 22.5Z" fill="#f7c12f"/><path d="M11 12 L11 22.5 A10.5 10.5 0 0 1 1.9 6.7Z" fill="#2ea44f"/><circle cx="11" cy="12" r="5" fill="#fff"/><circle cx="11" cy="12" r="3.8" fill="#3b7de0"/></svg>
<div style="position:absolute;left:285px;top:744.5px;width:22.7px;height:22.5px;background:#1f2430;border-radius:1px"></div>
<svg style="position:absolute;left:288px;top:749px;" width="17" height="18" viewBox="0 0 20 20" preserveAspectRatio="none"><path d="M3 16 A8.2 8.2 0 1 1 17 16" fill="none" stroke="#e8e8e8" stroke-width="2"/><path d="M10 12 L14 6" stroke="#e8e8e8" stroke-width="2"/></svg>
<svg style="position:absolute;left:320.6px;top:744px;" width="34" height="23" viewBox="0 0 34 23" preserveAspectRatio="none"><path d="M17 6 Q21 6 23 8 L29 1 L27 10 Q30 13 29 17 L33 20 L28 21 Q25 25 17 24 Q9 24 7 19 L1 17 L6 14 Q5 10 8 8 L5 3 L11 6 Q14 5 17 6Z" fill="#f4821f"/><path d="M20.5 11 V20 M20.5 14.5 A3.5 3.8 0 1 0 20.5 16.5" fill="none" stroke="#fff" stroke-width="2.2"/></svg>
<svg style="position:absolute;left:377px;top:745px;" width="22" height="22" viewBox="0 0 22 22" preserveAspectRatio="none"><path d="M4 1 H17 L21 5 V22 H4Z" fill="#e6f2e4" stroke="#6aa864" stroke-width="1"/><path d="M13 12 H20 M13 15 H20 M13 18 H20" stroke="#8cc084" stroke-width="1"/><rect x="1" y="3" width="13" height="15" fill="#8fd27a"/><path d="M3.5 5 L11.5 16.5 M11.5 5 L3.5 16.5" stroke="#1f7a33" stroke-width="3.2"/></svg>
<div class="st" style="left:758px;top:747.5px;font-size:13px;color:#e6e6e6;font-weight:normal;transform:scaleX(.75);transform-origin:0 0">RU</div>
<svg style="position:absolute;left:785px;top:753px;" width="11" height="14" viewBox="0 0 11 14" preserveAspectRatio="none"><ellipse cx="5.5" cy="7" rx="5.2" ry="6.5" fill="#4d8fd8"/><path d="M2.8 7 L5 9.5 L8.5 4" fill="none" stroke="#fff" stroke-width="1.4"/></svg>
<svg style="position:absolute;left:799px;top:751px;" width="12" height="16" viewBox="0 0 12 16" preserveAspectRatio="none"><path d="M1 2 L5 5 Q7 1 9 3 L11 2 L9 7 Q12 9 10 13 L7 15 H4 Q1 12 2.5 8Z" fill="#f28c1b"/><circle cx="6" cy="10.5" r="2" fill="#fff"/></svg>
<svg style="position:absolute;left:817px;top:752px;" width="11" height="15" viewBox="0 0 11 15" preserveAspectRatio="none"><path d="M9 1 L10 4 L4 12 L1 11Z" fill="#c94a3c"/><path d="M2 11 L1 14 L4 13Z" fill="#8c8c8c"/><circle cx="7" cy="5" r="1.2" fill="#ddd"/></svg>
<svg style="position:absolute;left:836px;top:753px;" width="10" height="13" viewBox="0 0 10 13" preserveAspectRatio="none"><path d="M1 4.5 H3.5 L6.5 1.5 V11.5 L3.5 8.5 H1Z" fill="#e8e8e8"/><path d="M8 3.5 Q9.5 6.5 8 9.5" fill="none" stroke="#e8e8e8" stroke-width="1"/></svg>
<svg style="position:absolute;left:853px;top:751px;" width="12" height="16" viewBox="0 0 12 16" preserveAspectRatio="none"><rect x="1" y="1" width="8" height="6" fill="#b9c6d3" stroke="#666" stroke-width=".8"/><path d="M4 9 L7 13 L11 6" fill="none" stroke="#3bb24a" stroke-width="2.2"/></svg>
<svg style="position:absolute;left:870px;top:752px;" width="11" height="15" viewBox="0 0 11 15" preserveAspectRatio="none"><path d="M2 1 V14" stroke="#ddd" stroke-width="1.2"/><path d="M2.5 2 H10 L8 5 L10 8 H2.5Z" fill="#eee"/></svg>
<svg style="position:absolute;left:890px;top:751px;" width="10" height="16" viewBox="0 0 10 16" preserveAspectRatio="none"><rect x="2" y="3" width="6" height="9" fill="none" stroke="#e8e8e8" stroke-width="1.4"/><path d="M4 0.5 V3 M6 0.5 V3 M5 12 V16" stroke="#e8e8e8" stroke-width="1.2"/></svg>
<svg style="position:absolute;left:905px;top:753px;" width="13" height="13" viewBox="0 0 13 13" preserveAspectRatio="none"><path d="M1 12 V10 M3.5 12 V8 M6 12 V6 M8.5 12 V4 M11 12 V2" stroke="#e8e8e8" stroke-width="1.6"/></svg>
<svg style="position:absolute;left:922px;top:751px;" width="12" height="16" viewBox="0 0 12 16" preserveAspectRatio="none"><ellipse cx="6" cy="8.5" rx="5.5" ry="7" fill="#c9d4dc" stroke="#7a8a96" stroke-width="1"/><path d="M6 9 L9 3" stroke="#3a6aa0" stroke-width="1.6"/></svg>
<div class="st" style="left:956.7px;top:743.7px;font-size:13px;color:#f0f0f0;font-weight:normal;transform:scaleX(.75);transform-origin:0 0">12:16</div>
<div class="st" style="left:950px;top:759.5px;font-size:13px;color:#f0f0f0;font-weight:normal;transform:scaleX(.75);transform-origin:0 0">17.03.2021</div>
<div style="position:absolute;left:994px;top:740px;width:11.5px;height:27px;background:linear-gradient(90deg,#4a4a4a,#6a6a6a 40%,#444);border-left:1px solid #777;box-sizing:border-box"></div>
</body></html>
